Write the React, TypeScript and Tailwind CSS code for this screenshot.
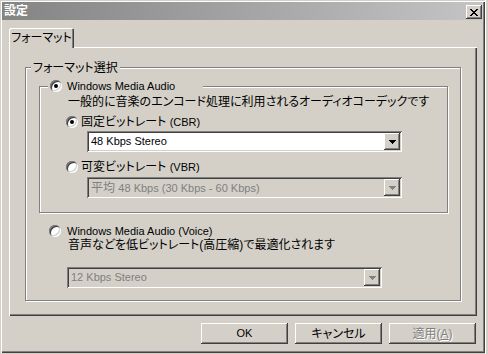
import React from "react";

const raised =
  "shadow-[inset_-1px_-1px_0_#404040,inset_1px_1px_0_#ffffff,inset_-2px_-2px_0_#808080]";
const sunken =
  "shadow-[inset_1px_1px_0_#808080,inset_-1px_-1px_0_#ffffff,inset_2px_2px_0_#404040,inset_-2px_-2px_0_#d4d0c8]";

// latin runs are set a touch smaller, the dialog font is narrow
const L = ({ children }: { children: React.ReactNode }) => <span className="text-[11px]">{children}</span>;

const Radio = ({ checked }: { checked?: boolean }) => (
  <span className={`w-[12px] h-[12px] rounded-full bg-white shrink-0 flex items-center justify-center ${sunken}`}>
    {checked && <span className="w-[4px] h-[4px] rounded-full bg-black" />}
  </span>
);

const Arrow = ({ color }: { color: string }) => (
  <svg width="7" height="4" shapeRendering="crispEdges">
    <rect x="0" y="0" width="7" height="1" fill={color} />
    <rect x="1" y="1" width="5" height="1" fill={color} />
    <rect x="2" y="2" width="3" height="1" fill={color} />
    <rect x="3" y="3" width="1" height="1" fill={color} />
  </svg>
);

const Combo = ({ children, disabled }: { children: React.ReactNode; disabled?: boolean }) => (
  <div
    className={`flex h-[21px] w-[315px] p-[2px] ${sunken} ${
      disabled ? "bg-[#d4d0c8] text-[#808080]" : "bg-white text-black"
    }`}
  >
    <div className="flex-1 flex items-center pl-[2px] leading-none">{children}</div>
    <div className={`w-[16px] h-full bg-[#d4d0c8] flex items-center justify-center ${raised}`}>
      <Arrow color={disabled ? "#808080" : "#000000"} />
    </div>
  </div>
);

const CloseGlyph = () => {
  const rows = [
    [0, 1, 6, 7],
    [1, 2, 5, 6],
    [2, 3, 4, 5],
    [3, 4],
    [2, 3, 4, 5],
    [1, 2, 5, 6],
    [0, 1, 6, 7],
  ];
  return (
    <svg width="8" height="7" shapeRendering="crispEdges">
      {rows.map((r, y) => r.map((x) => <rect key={`${x}-${y}`} x={x} y={y} width="1" height="1" fill="#000" />))}
    </svg>
  );
};

const Button = ({ children, disabled }: { children: React.ReactNode; disabled?: boolean }) => (
  <button
    className={`w-[87px] h-[21px] bg-[#d4d0c8] flex items-center justify-center leading-none ${raised} ${
      disabled ? "text-[#808080] [text-shadow:1px_1px_0_#ffffff]" : "text-black"
    }`}
  >
    {children}
  </button>
);

export default function App() {
  return (
    <div className="w-[488px] h-[354px] bg-[#d4d0c8] flex overflow-hidden font-['Liberation_Sans','Noto_Sans_CJK_JP',sans-serif] [font-feature-settings:'palt'] text-[12px] text-black">
      <div className="w-[485px] h-[353px] shrink-0 flex flex-col pl-[2px] pr-[3px] pt-[2px] shadow-[inset_1px_1px_0_#d4d0c8,inset_2px_2px_0_#ffffff,inset_-1px_-1px_0_#404040,inset_-2px_-2px_0_#808080]">
        {/* title bar */}
        <div className="h-[18px] flex bg-linear-to-r from-[#848484] to-[#c4c4c4]">
          <span className="pl-[2px] text-white font-bold leading-[18px]">設定</span>
          <div className={`ml-auto mt-[3px] w-[16px] h-[14px] bg-[#d4d0c8] flex items-center justify-center ${raised}`}>
            <CloseGlyph />
          </div>
        </div>

        {/* tab */}
        <div className="mt-[8px] ml-[7px] relative z-10 w-[65px] h-[20px] bg-[#d4d0c8] rounded-t-[2px] flex items-center justify-center leading-none pb-[1px] shadow-[inset_1px_1px_0_#ffffff,inset_-1px_0_0_#404040,inset_-2px_0_0_#808080]">
          フォーマット
        </div>

        {/* tab panel */}
        <div className="-mt-[1px] ml-[7px] w-[468px] h-[269px] pt-[20px] pl-[16px] shadow-[inset_1px_1px_0_#ffffff,inset_-1px_-1px_0_#404040,inset_-2px_-2px_0_#808080]">
          <div className="relative w-[436px] h-[234px] border border-[#808080] shadow-[inset_1px_1px_0_#ffffff,1px_1px_0_#ffffff]">
            <span className="absolute -top-[7px] left-[5px] px-[2px] bg-[#d4d0c8] leading-[14px]">
              フォーマット選択
            </span>

            {/* inner group */}
            <div className="relative mt-[18px] ml-[13px] w-[409px] h-[127px] border border-[#808080] shadow-[inset_1px_1px_0_#ffffff,1px_1px_0_#ffffff]">
              <span className="absolute -top-[8px] left-[8px] pl-[2px] pr-[28px] bg-[#d4d0c8] h-[14px] flex items-center gap-[5px] leading-[14px]">
                <Radio checked />
                <L>Windows Media Audio</L>
              </span>
              <div className="mt-[8px] ml-[28px] leading-[14px]">
                一般的に音楽のエンコード処理に利用されるオーディオコーデックです
              </div>
              <div className="mt-[6px] ml-[26px] h-[14px] flex items-center gap-[3px] leading-[14px]">
                <Radio checked />
                <span>
                  固定ビットレート <L>(CBR)</L>
                </span>
              </div>
              <div className="mt-[2px] ml-[47px]">
                <Combo>
                  <L>48 Kbps Stereo</L>
                </Combo>
              </div>
              <div className="mt-[8px] ml-[26px] h-[14px] flex items-center gap-[3px] leading-[14px]">
                <Radio />
                <span>
                  可変ビットレート <L>(VBR)</L>
                </span>
              </div>
              <div className="mt-[3px] ml-[47px]">
                <Combo disabled>
                  <span>
                    平均 <L>48 Kbps (30 Kbps - 60 Kbps)</L>
                  </span>
                </Combo>
              </div>
            </div>

            <div className="mt-[11px] ml-[23px] h-[14px] flex items-center gap-[6px] leading-[14px]">
              <Radio />
              <L>Windows Media Audio (Voice)</L>
            </div>
            <div className="ml-[42px] leading-[14px]">音声などを低ビットレート(高圧縮)で最適化されます</div>
            <div className="mt-[15px] ml-[41px]">
              <Combo disabled>
                <L>12 Kbps Stereo</L>
              </Combo>
            </div>
          </div>
        </div>

        {/* buttons */}
        <div className="mt-[7px] mr-[6px] flex justify-end gap-[7px]">
          <Button>
            <L>OK</L>
          </Button>
          <Button>キャンセル</Button>
          <Button disabled>
            適用(<span className="underline">A</span>)
          </Button>
        </div>
      </div>
      <div className="flex-1 h-full bg-[#d4d0c8] shadow-[inset_1px_0_0_#ffffff]" />
    </div>
  );
}
